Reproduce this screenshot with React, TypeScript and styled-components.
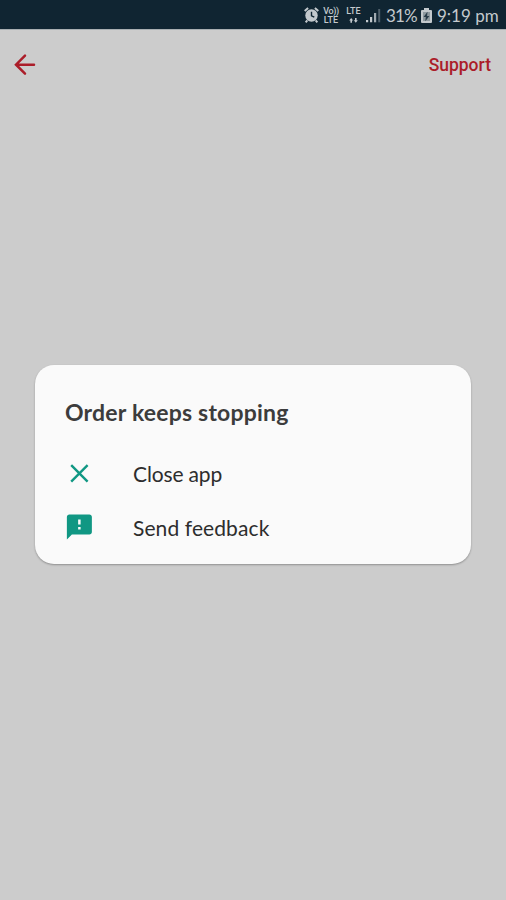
// src/App.tsx
import React from "react";
import styled, { createGlobalStyle } from "styled-components";

const GlobalStyle = createGlobalStyle`
  * {
    box-sizing: border-box;
  }

  body {
    margin: 0;
    background: #cccccc;
  }
`;

const Screen = styled.div`
  display: flex;
  flex-direction: column;
  width: 506px;
  height: 900px;
  overflow: hidden;
  background: #cccccc;
  font-family: Lato, "Open Sans", sans-serif;
`;

const StatusBar = styled.header`
  display: flex;
  justify-content: flex-end;
  align-items: center;
  flex: none;
  height: 30px;
  padding: 2px 8px 0 0;
  background: #102532;
  border-bottom: 1px solid #a9afb2;
  color: #c3c9cd;
`;

const StatusIcon = styled.svg<{ $gap?: number }>`
  display: block;
  flex: none;
  margin-right: ${({ $gap }) => $gap ?? 0}px;
`;

const NetworkLabel = styled.div<{ $width: number; $gap: number }>`
  display: flex;
  flex-direction: column;
  align-items: center;
  width: ${({ $width }) => $width}px;
  margin-right: ${({ $gap }) => $gap}px;
  font: 500 9px/9px Roboto, sans-serif;
  white-space: nowrap;
`;

const NetworkText = styled.span<{ $spacing?: number }>`
  letter-spacing: ${({ $spacing }) => $spacing ?? 0}px;
`;

const StatusText = styled.span<{ $width: number; $spacing: number }>`
  width: ${({ $width }) => $width}px;
  font-size: 17px;
  line-height: 24px;
  letter-spacing: ${({ $spacing }) => $spacing}px;
  white-space: nowrap;
`;

const AppBar = styled.nav`
  display: flex;
  justify-content: space-between;
  align-items: center;
  flex: none;
  height: 70px;
  padding: 0 15px 0 10px;
`;

const BackButton = styled.button`
  display: flex;
  padding: 0;
  border: none;
  background: none;
`;

const SupportButton = styled.button`
  padding: 0;
  border: none;
  background: none;
  color: #ab1d29;
  font: 500 17.5px/24px Roboto, sans-serif;
`;

const Content = styled.main`
  flex: 1;
  padding: 265px 35px 0;
`;

const Dialog = styled.section`
  height: 199px;
  padding: 31px 30px 0;
  border-radius: 19px;
  background: #fafafa;
  box-shadow: 0 1px 2px rgba(0, 0, 0, 0.3);
`;

const DialogTitle = styled.h1`
  margin: 0 0 19px;
  color: #3c3c3c;
  font-size: 23px;
  font-weight: 700;
  line-height: 32px;
  letter-spacing: 0.2px;
  white-space: nowrap;
`;

const DialogAction = styled.button<{ $spacing: number }>`
  display: flex;
  align-items: center;
  width: 100%;
  height: 54px;
  margin: 0;
  padding: 0;
  border: none;
  background: none;
  color: #2d2d2d;
  font: 400 21px/28px Lato, sans-serif;
  letter-spacing: ${({ $spacing }) => $spacing}px;
  text-align: left;

  svg {
    flex: none;
    margin: -3px 39px 0 -1px;
  }
`;

const AlarmIcon = () => (
  <StatusIcon width="16" height="17" viewBox="0 0 16 17" $gap={4}>
    <circle cx="8.5" cy="8.5" r="6.2" fill="currentColor" />
    <path
      d="M1.7 4.1 5.1 1.1M15.3 4.1l-3.4-3M4.3 13.3l-1.6 2M12.7 13.3l1.6 2"
      stroke="currentColor"
      strokeWidth="2"
    />
    <path d="M8.5 4.7V8.9l2.8 1.3" fill="none" stroke="#102532" strokeWidth="1.4" />
  </StatusIcon>
);

const DataArrowsIcon = () => (
  <StatusIcon width="9" height="9" viewBox="0 0 9 9">
    <path
      d="M.2 4.6 2.2 2l2 2.6H3v2.2H1.4V4.6zM4.8 4.2 6.8 6.8l2-2.6H7.6V2H6v2.2z"
      fill="currentColor"
    />
  </StatusIcon>
);

const SignalIcon = () => (
  <StatusIcon width="15" height="15" viewBox="0 0 15 15" $gap={5}>
    <path d="M0 12h2.2v2.3H0zM4 9h2.2v5.3H4z" fill="currentColor" />
    <path d="M8 5h2.2v9.3H8z" fill="#a0aab0" />
    <path d="M12.2 1h2v13.3h-2z" fill="#4f606b" />
  </StatusIcon>
);

const BatteryIcon = () => (
  <StatusIcon width="11" height="16" viewBox="0 0 11 16" $gap={5}>
    <path
      d="M3 0h5v2h2q1 0 1 1v11q0 1-1 1H1q-1 0-1-1V3q0-1 1-1h2z"
      fill="currentColor"
    />
    <path d="M2 4h7v9H2z" fill="#8e999f" />
    <path d="M6.5 3.8 2.6 9h2.2l-.5 4.2L8.4 8H6.1z" fill="#283b48" />
  </StatusIcon>
);

const ArrowBackIcon = () => (
  <svg width="29" height="29" viewBox="0 0 29 29">
    <path
      d="M24 13.7H6.2M15 4.7l-9 9 9 9"
      fill="none"
      stroke="#ab1d29"
      strokeWidth="2.5"
      strokeLinecap="round"
    />
  </svg>
);

const CloseIcon = () => (
  <svg width="30" height="30" viewBox="0 0 30 30">
    <path
      d="m7.2 7.2 16.4 16.4m0-16.4L7.2 23.6"
      stroke="#109783"
      strokeWidth="2.4"
    />
  </svg>
);

const FeedbackIcon = () => (
  <svg width="30" height="30" viewBox="0 0 24 24">
    <path
      d="M20.3 2H4.3c-1.1 0-2 .9-2 2v18l4-4h14c1.1 0 2-.9 2-2V4c0-1.1-.9-2-2-2zm-7 12h-2v-2h2v2zm0-4h-2V6h2v4z"
      fill="#109783"
    />
  </svg>
);

const App: React.FC = () => {
  return (
    <>
      <GlobalStyle />
      <Screen>
        <StatusBar>
          <AlarmIcon />
          <NetworkLabel $width={16} $gap={6}>
            <NetworkText $spacing={-0.4}>Vo))</NetworkText>
            <NetworkText>LTE</NetworkText>
          </NetworkLabel>
          <NetworkLabel $width={17} $gap={4}>
            <NetworkText>LTE</NetworkText>
            <DataArrowsIcon />
          </NetworkLabel>
          <SignalIcon />
          <StatusText $width={35} $spacing={-0.8}>
            31%
          </StatusText>
          <BatteryIcon />
          <StatusText $width={61} $spacing={0}>
            9:19 pm
          </StatusText>
        </StatusBar>

        <AppBar>
          <BackButton aria-label="Back">
            <ArrowBackIcon />
          </BackButton>
          <SupportButton>Support</SupportButton>
        </AppBar>

        <Content>
          <Dialog role="dialog">
            <DialogTitle>Order keeps stopping</DialogTitle>
            <DialogAction $spacing={-0.15}>
              <CloseIcon />
              Close app
            </DialogAction>
            <DialogAction $spacing={0.1}>
              <FeedbackIcon />
              Send feedback
            </DialogAction>
          </Dialog>
        </Content>
      </Screen>
    </>
  );
};

export default App;
